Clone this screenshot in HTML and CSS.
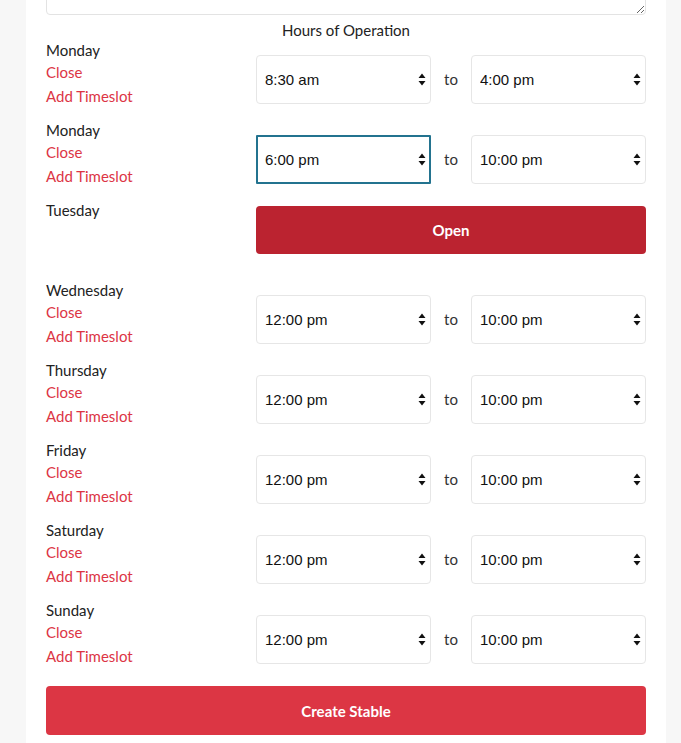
FILE: index.html
```html
<!DOCTYPE html>
<html>
<head>
<meta charset="utf-8">
<link rel="stylesheet" href="styles.css">
</head>
<body>
<div class="panel">
  <textarea class="notes"></textarea>
  <h3 class="heading">Hours of Operation</h3>

  <div class="row">
    <div class="day"><div class="name">Monday</div><a class="link">Close</a><a class="link">Add Timeslot</a></div>
    <div class="times">
      <div class="sel"><select><option>8:30 am</option></select><span class="arr"><svg width="8" height="13" viewBox="0 0 8 13"><path d="M4 0.5L7.5 5H0.5Z M4 12.5L7.5 8H0.5Z" fill="#111"/></svg></span></div>
      <span class="to">to</span>
      <div class="sel"><select><option>4:00 pm</option></select><span class="arr"><svg width="8" height="13" viewBox="0 0 8 13"><path d="M4 0.5L7.5 5H0.5Z M4 12.5L7.5 8H0.5Z" fill="#111"/></svg></span></div>
    </div>
  </div>

  <div class="row">
    <div class="day"><div class="name">Monday</div><a class="link">Close</a><a class="link">Add Timeslot</a></div>
    <div class="times">
      <div class="sel focus"><select><option>6:00 pm</option></select><span class="arr"><svg width="8" height="13" viewBox="0 0 8 13"><path d="M4 0.5L7.5 5H0.5Z M4 12.5L7.5 8H0.5Z" fill="#111"/></svg></span></div>
      <span class="to">to</span>
      <div class="sel"><select><option>10:00 pm</option></select><span class="arr"><svg width="8" height="13" viewBox="0 0 8 13"><path d="M4 0.5L7.5 5H0.5Z M4 12.5L7.5 8H0.5Z" fill="#111"/></svg></span></div>
    </div>
  </div>

  <div class="row">
    <div class="day"><div class="name">Tuesday</div></div>
    <div class="times open-wrap"><button class="open">Open</button></div>
  </div>

  <div class="row">
    <div class="day"><div class="name">Wednesday</div><a class="link">Close</a><a class="link">Add Timeslot</a></div>
    <div class="times">
      <div class="sel"><select><option>12:00 pm</option></select><span class="arr"><svg width="8" height="13" viewBox="0 0 8 13"><path d="M4 0.5L7.5 5H0.5Z M4 12.5L7.5 8H0.5Z" fill="#111"/></svg></span></div>
      <span class="to">to</span>
      <div class="sel"><select><option>10:00 pm</option></select><span class="arr"><svg width="8" height="13" viewBox="0 0 8 13"><path d="M4 0.5L7.5 5H0.5Z M4 12.5L7.5 8H0.5Z" fill="#111"/></svg></span></div>
    </div>
  </div>

  <div class="row">
    <div class="day"><div class="name">Thursday</div><a class="link">Close</a><a class="link">Add Timeslot</a></div>
    <div class="times">
      <div class="sel"><select><option>12:00 pm</option></select><span class="arr"><svg width="8" height="13" viewBox="0 0 8 13"><path d="M4 0.5L7.5 5H0.5Z M4 12.5L7.5 8H0.5Z" fill="#111"/></svg></span></div>
      <span class="to">to</span>
      <div class="sel"><select><option>10:00 pm</option></select><span class="arr"><svg width="8" height="13" viewBox="0 0 8 13"><path d="M4 0.5L7.5 5H0.5Z M4 12.5L7.5 8H0.5Z" fill="#111"/></svg></span></div>
    </div>
  </div>

  <div class="row">
    <div class="day"><div class="name">Friday</div><a class="link">Close</a><a class="link">Add Timeslot</a></div>
    <div class="times">
      <div class="sel"><select><option>12:00 pm</option></select><span class="arr"><svg width="8" height="13" viewBox="0 0 8 13"><path d="M4 0.5L7.5 5H0.5Z M4 12.5L7.5 8H0.5Z" fill="#111"/></svg></span></div>
      <span class="to">to</span>
      <div class="sel"><select><option>10:00 pm</option></select><span class="arr"><svg width="8" height="13" viewBox="0 0 8 13"><path d="M4 0.5L7.5 5H0.5Z M4 12.5L7.5 8H0.5Z" fill="#111"/></svg></span></div>
    </div>
  </div>

  <div class="row">
    <div class="day"><div class="name">Saturday</div><a class="link">Close</a><a class="link">Add Timeslot</a></div>
    <div class="times">
      <div class="sel"><select><option>12:00 pm</option></select><span class="arr"><svg width="8" height="13" viewBox="0 0 8 13"><path d="M4 0.5L7.5 5H0.5Z M4 12.5L7.5 8H0.5Z" fill="#111"/></svg></span></div>
      <span class="to">to</span>
      <div class="sel"><select><option>10:00 pm</option></select><span class="arr"><svg width="8" height="13" viewBox="0 0 8 13"><path d="M4 0.5L7.5 5H0.5Z M4 12.5L7.5 8H0.5Z" fill="#111"/></svg></span></div>
    </div>
  </div>

  <div class="row">
    <div class="day"><div class="name">Sunday</div><a class="link">Close</a><a class="link">Add Timeslot</a></div>
    <div class="times">
      <div class="sel"><select><option>12:00 pm</option></select><span class="arr"><svg width="8" height="13" viewBox="0 0 8 13"><path d="M4 0.5L7.5 5H0.5Z M4 12.5L7.5 8H0.5Z" fill="#111"/></svg></span></div>
      <span class="to">to</span>
      <div class="sel"><select><option>10:00 pm</option></select><span class="arr"><svg width="8" height="13" viewBox="0 0 8 13"><path d="M4 0.5L7.5 5H0.5Z M4 12.5L7.5 8H0.5Z" fill="#111"/></svg></span></div>
    </div>
  </div>

  <button class="create">Create Stable</button>
</div>
</body>
</html>
```

FILE: styles.css
```css
html, body {
  margin: 0;
  padding: 0;
  background: #f7f7f7;
  font-family: "Lato", "Open Sans", sans-serif;
  color: #212529;
}
.panel {
  width: 600px;
  margin: 0 0 0 26px;
  padding: 0 20px 20px;
  background: #fff;
  display: flex;
  flex-direction: column;
}
.notes {
  display: block;
  width: 600px;
  height: 55px;
  margin-top: -40px;
  box-sizing: border-box;
  border: 1px solid #e3e3e3;
  border-radius: 4px;
  resize: vertical;
  font: inherit;
}
.heading {
  margin: 5px 0 0;
  font-weight: 400;
  font-size: 15px;
  line-height: 20px;
  text-align: center;
  color: #222;
}
.row {
  display: grid;
  grid-template-columns: 180px 390px;
  column-gap: 30px;
  height: 80px;
}
.day {
  display: flex;
  flex-direction: column;
  align-items: flex-start;
  font-size: 15px;
}
.name {
  line-height: 20px;
  color: #222;
}
.link {
  color: #dc3545;
  line-height: 24px;
  cursor: pointer;
}
.times {
  display: flex;
  align-items: flex-start;
  padding-top: 15px;
}
.sel {
  position: relative;
  width: 175px;
  height: 49px;
}
.sel select {
  -webkit-appearance: none;
  appearance: none;
  width: 100%;
  height: 100%;
  box-sizing: border-box;
  border: 1px solid #e6e6e6;
  border-radius: 4px;
  background: #fff;
  padding: 0 0 0 8px;
  font-family: "Liberation Sans", Arial, sans-serif;
  font-size: 15px;
  color: #111;
  outline: none;
}
.sel.focus select {
  border: 2px solid #23738f;
  border-radius: 1px;
  padding-left: 7px;
}
.arr {
  position: absolute;
  right: 5px;
  top: 18px;
  display: flex;
  pointer-events: none;
}
.to {
  width: 40px;
  text-align: center;
  line-height: 49px;
  font-size: 15px;
  color: #333;
}
.open-wrap {
  padding-top: 6px;
}
.open {
  width: 390px;
  height: 48px;
  border: none;
  border-radius: 4px;
  background: #bb2330;
  color: #fff;
  font-family: "Lato", sans-serif;
  font-weight: 700;
  font-size: 15px;
}
.create {
  width: 600px;
  height: 49px;
  margin-top: 6px;
  border: none;
  border-radius: 4px;
  background: #dc3644;
  color: #fff;
  font-family: "Lato", sans-serif;
  font-weight: 700;
  font-size: 15px;
}
```
